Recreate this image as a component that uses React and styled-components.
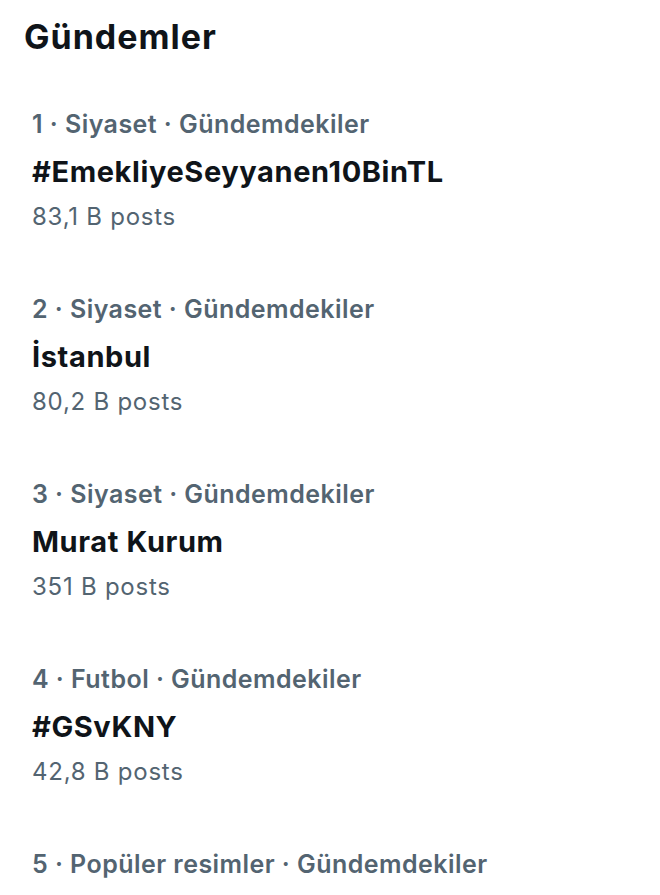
import styled, { createGlobalStyle } from "styled-components";

const GlobalStyle = createGlobalStyle`
  body {
    margin: 0;
    background: #ffffff;
    font-family: Inter, Roboto, "Noto Sans", "Liberation Sans", sans-serif;
    -webkit-font-smoothing: antialiased;
  }
`;

const Container = styled.div`
  width: 660px;
  background: #ffffff;
`;

const Heading = styled.h2`
  margin: 0;
  padding: 15px 24px 18px;
  font-size: 34px;
  line-height: 44px;
  font-weight: 700;
  letter-spacing: 1px;
  color: #0f1419;
`;

const TrendList = styled.ul`
  list-style: none;
  margin: 0;
  padding: 0;
`;

const TrendItem = styled.li`
  display: flex;
  flex-direction: column;
  padding: 24px 32px 25px;
`;

const Meta = styled.span`
  font-size: 25px;
  line-height: 46px;
  font-weight: 600;
  letter-spacing: 0.45px;
  color: #536471;
`;

const TrendTitle = styled.span`
  font-size: 29px;
  line-height: 50px;
  font-weight: 700;
  letter-spacing: 0.6px;
  color: #0f1419;
`;

const PostCount = styled.span`
  font-size: 24px;
  line-height: 40px;
  font-weight: 400;
  letter-spacing: 0.75px;
  color: #536471;
`;

const trends = [
  { rank: 1, category: "Siyaset", title: "#EmekliyeSeyyanen10BinTL", posts: "83,1 B" },
  { rank: 2, category: "Siyaset", title: "İstanbul", posts: "80,2 B" },
  { rank: 3, category: "Siyaset", title: "Murat Kurum", posts: "351 B" },
  { rank: 4, category: "Futbol", title: "#GSvKNY", posts: "42,8 B" },
  { rank: 5, category: "Popüler resimler", title: "", posts: "" },
];

const App = () => {
  return (
    <Container>
      <GlobalStyle />
      <Heading>Gündemler</Heading>
      <TrendList>
        {trends.map((t) => (
          <TrendItem key={t.rank}>
            <Meta>
              {t.rank} · {t.category} · Gündemdekiler
            </Meta>
            {t.title && <TrendTitle>{t.title}</TrendTitle>}
            {t.posts && <PostCount>{t.posts} posts</PostCount>}
          </TrendItem>
        ))}
      </TrendList>
    </Container>
  );
};

export default App;
